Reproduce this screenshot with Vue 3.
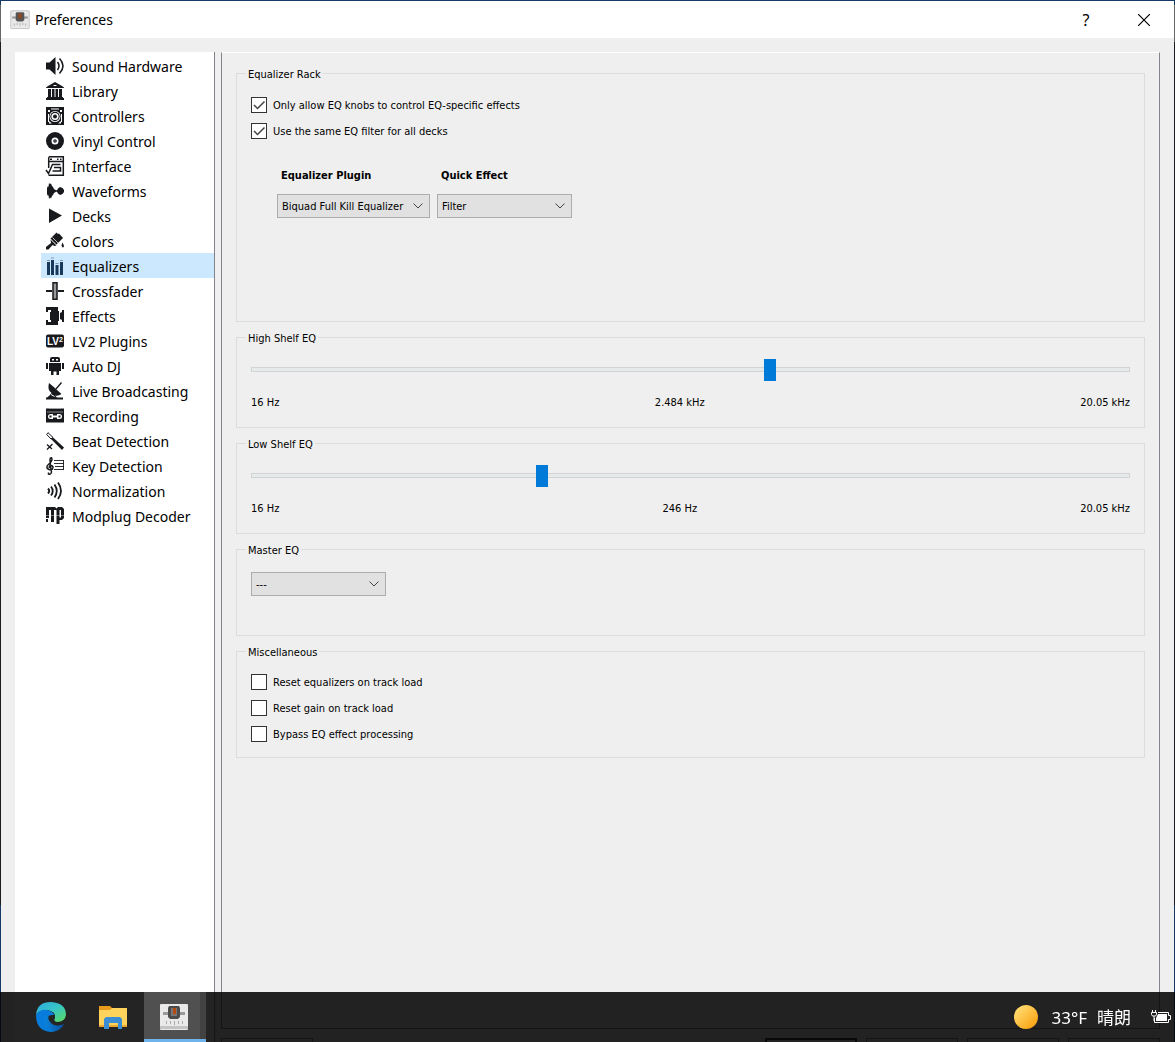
<script setup>
import { ref } from 'vue'

const pages = [
  { name: 'Sound Hardware', icon: '<path d="M0 5.5H3.5L9.5 0V18L3.5 12.500H0z"/><g fill="none" stroke="currentColor" stroke-width="1.500"><path d="M11.500 5Q14.500 9 11.500 13"/><path d="M13.500 1.500Q20.500 9 13.500 16.500"/></g>' },
  { name: 'Library', icon: '<path d="M0 5.500L2 4L9 0L16 4L18 5.500V6H0zM2 7H5V15H2zM6 7H8.500V15H6zM9.500 7H12V15H9.500zM13 7H16V15H13zM1 15H17V16H18V18H0V16H1z"/><path d="M7.500 3.500H10.500" stroke="#fff"/>' },
  { name: 'Controllers', icon: '<path d="M0 0H18V18H0z"/><g fill="#fff"><path d="M2 3H4V5H2zM14 3H16V5H14zM5 1.500H13V2.500H5zM2 7H3V15H2zM15 7H16V15H15zM3 14L6 16.500H3zM15 14L12 16.500H15z"/><circle cx="9" cy="9.500" r="5.500"/></g><circle cx="9" cy="9.500" r="4.700"/><circle cx="9" cy="9.500" r="3.600" fill="#fff"/><circle cx="9" cy="9.500" r="2"/>' },
  { name: 'Vinyl Control', icon: '<circle cx="9" cy="9" r="9"/><circle cx="9" cy="9" r="3.500" fill="#fff"/><circle cx="9" cy="9" r="1.800"/><circle cx="9" cy="9" r=".6" fill="#fff"/>' },
  { name: 'Interface', icon: '<g fill="none" stroke="currentColor" stroke-width="1.500"><path d="M2.700 11V1.500Q2.700 -.3 3.500 -.3H17.300V18.300H2.500M3 4.500H17"/><path d="M0 13L2.500 16.500L6.500 7.500H14.500M8 10.500H14.500V14H6.500"/></g><path d="M4 1.500H6V3H4zM11 1.500H12.500V3H11zM14 1.500H15.500V3H14z"/>' },
  { name: 'Waveforms', icon: '<path d="M1 6L2 4L2.500 5L3 1L4 2L5 1.500L6 4L7 5L8 7L10 8.300H11L12 6.500L14 5L16.500 6L18 8V10L16.500 12L14 13L12 11.500L11 9.700H10L8 11L7 13L6 14L5 16.500L4 15.500L3 17L2.500 13L2 14L1 12z"/>' },
  { name: 'Decks', icon: '<path d="M3 1.500L16 8.500L3 16z"/>' },
  { name: 'Colors', icon: '<path d="M7 4L10.500 .5L12 2L13 1.500L17 6L14.500 8.500L10.500 12.500L4.500 6.500zM4.500 7.500L10.500 13.500L8.500 14L6.500 13L2.500 17.500H0V15L5 11zM16.500 10.500Q19 15 17 15.500Q14.500 15 16.500 10.500z"/><path d="M6.500 5.500L12 11" stroke="#fff" stroke-width=".7"/>' },
  { name: 'Equalizers', icon: '<path d="M1 5H4V18H1zM5 3H8V18H5zM9.500 8H12.500V18H9.500zM14 5H17V18H14z"/><path d="M1 3.500H4M5 1H8M9.500 6.500H12.500M14 3.500H17" stroke="#7d98ac"/>' },
  { name: 'Crossfader', icon: '<path d="M0 8H6V10H0zM12 8H18V10H12z"/><path d="M7 .7H11V17.300H7z" fill="#999" stroke="currentColor" stroke-width="1.500"/>' },
  { name: 'Effects', icon: '<path d="M0 0H12V4H13V14H12V18H0V13H2V15H5V13H4V5H5V3H2V5H0zM14 6L16 5V3H18V15H16V13L14 12z"/>' },
  { name: 'LV2 Plugins', icon: '<rect y="2.500" width="18" height="13" rx="2"/><text x="1" y="13" fill="#fff" font-family="Liberation Sans,sans-serif" font-weight="bold" font-size="10">LV</text><text x="13" y="10" fill="#fff" font-family="Liberation Sans,sans-serif" font-weight="bold" font-size="7">2</text>' },
  { name: 'Auto DJ', icon: '<path d="M4 5V2Q4 0 6 0H12Q14 0 14 2V5zM3 6H15V14H13V18H10.500V14.500H7.500V18H5V14H3zM0 6H2V12H0zM16 6H18V12H16z"/><path d="M6 2H8V3.500H6zM10 2H12V3.500H10z" fill="#fff"/>' },
  { name: 'Live Broadcasting', icon: '<path d="M3 1Q1 8 5.500 11L3.500 13.500L1 15.500H0V17.500H17V15.500H11L9 13.500Q12 14.500 15.500 12L10.500 7.500L9 6z"/><path d="M10 7L15.500 .5" stroke="currentColor" stroke-width="1.300"/><path d="M5 12.500L8.500 14.500" stroke="#fff"/>' },
  { name: 'Recording', icon: '<path d="M0 1.500H18V15.500H0z"/><path d="M3 1.500H15M1 5H17" stroke="#aaa" stroke-width=".8"/><rect x="2" y="7" width="14" height="5" rx="2.500" fill="#fff"/><path d="M3.500 8.500H5.500V10.500H3.500zM12.500 8.500H14.500V10.500H12.500zM7 7H11V8.500H7zM7 10.500H11V12H7z"/>' },
  { name: 'Beat Detection', icon: '<path d="M6 4.500L18 15.500L16 18L4.500 6.500z"/><path d="M2 .7L7 5.500L5 7L.7 2.500z" fill="#fff" stroke="currentColor"/><path d="M1 12.500L6 17M6.500 12L1 17.500" stroke="currentColor" stroke-width="1.300"/>' },
  { name: 'Key Detection', icon: '<path d="M5 13L4 3Q4 .5 5.500 .7Q7 3 4 6Q.5 8.500 1 11Q3 14 6.500 12Q8 9 5 8.500Q2.500 9 3.500 11M4 6L5.500 15Q5 18 2.500 17V15.500" fill="none" stroke="currentColor" stroke-width="1.500"/><path d="M8 3.500H18M8 6.500H18M9 9.500H18M8 12.500H18M17.500 3.500V13" fill="none" stroke="currentColor" stroke-width=".9"/>' },
  { name: 'Normalization', icon: '<g fill="none" stroke="currentColor" stroke-width="1.800"><path d="M2 6.500Q4.500 9 2 11.500M5 4.500Q8.500 9 5 13.500M8.500 2.500Q13 9 8.500 15.500M12 .5Q18 9 12 17"/></g>' },
  { name: 'Modplug Decoder', icon: '<path d="M0 0H9L10.500 1.500L12 0H16L18 2V11L16 13H13.500V17H10.500V3H8V15H5V3H3V11H0zM13.500 3V10.500H15V3zM0 12H2V15H0z"/><path d="M0 8.500H18" stroke="#fff" stroke-width=".4"/>' },
]

const current = ref('Equalizers')
const eqOnly = ref(true)
const sameFilter = ref(true)
const resetEq = ref(false)
const resetGain = ref(false)
const bypass = ref(false)
const highShelf = ref(592)
const lowShelf = ref(328)
</script>

<template>
  <div class="desktop">
    <main class="window">
      <header class="titlebar">
        <svg class="app-icon" viewBox="0 0 28 28" aria-hidden="true">
          <rect x="1" y="1" width="26" height="25" rx="1" fill="#e9e9e9" stroke="#b5b5b5" />
          <path d="M3 9h22v3H3z" fill="#999" />
          <path d="M9 3h10l1 2v9l-2 2H10l-2-2V5z" fill="#555" />
          <path d="M12 5h4v7h-4z" fill="#9a471c" />
          <path d="M6 19v3M10 18v3M14 18v4M18 18v3M22 19v3" stroke="#999" />
        </svg>
        <h1>Preferences</h1>
        <button class="title-btn help" aria-label="Help">?</button>
        <button class="title-btn close" aria-label="Close">
          <svg width="12" height="12" viewBox="0 0 12 12"><path d="M0 0L12 12M12 0L0 12" stroke="#000" stroke-width="1.200" /></svg>
        </button>
      </header>

      <div class="body">
        <nav class="sidebar" aria-label="Preference pages">
          <ul>
            <li v-for="p in pages" :key="p.name">
              <button :class="{ active: p.name === current }" @click="current = p.name">
                <svg class="page-icon" viewBox="0 0 18 18" aria-hidden="true" v-html="p.icon"></svg>
                <span>{{ p.name }}</span>
              </button>
            </li>
          </ul>
        </nav>

        <div class="content">
          <section class="panel">
            <fieldset class="rack">
              <legend>Equalizer Rack</legend>
              <div class="group">
                <label class="check"><input v-model="eqOnly" type="checkbox" /><span>Only allow EQ knobs to control EQ-specific effects</span></label>
                <label class="check"><input v-model="sameFilter" type="checkbox" /><span>Use the same EQ filter for all decks</span></label>
                <div class="plugins">
                  <div class="plugin wide">
                    <label for="plugin">Equalizer Plugin</label>
                    <select id="plugin"><option>Biquad Full Kill Equalizer</option></select>
                  </div>
                  <div class="plugin">
                    <label for="quick">Quick Effect</label>
                    <select id="quick"><option>Filter</option></select>
                  </div>
                </div>
              </div>
            </fieldset>

            <fieldset class="shelf">
              <legend>High Shelf EQ</legend>
              <div class="group">
                <input v-model="highShelf" type="range" min="0" max="1000" aria-label="High Shelf EQ" />
                <div class="scale"><span>16 Hz</span><span>2.484 kHz</span><span>20.05 kHz</span></div>
              </div>
            </fieldset>

            <fieldset class="shelf">
              <legend>Low Shelf EQ</legend>
              <div class="group">
                <input v-model="lowShelf" type="range" min="0" max="1000" aria-label="Low Shelf EQ" />
                <div class="scale"><span>16 Hz</span><span>246 Hz</span><span>20.05 kHz</span></div>
              </div>
            </fieldset>

            <fieldset class="master">
              <legend>Master EQ</legend>
              <div class="group">
                <select aria-label="Master EQ"><option>---</option></select>
              </div>
            </fieldset>

            <fieldset>
              <legend>Miscellaneous</legend>
              <div class="group">
                <label class="check"><input v-model="resetEq" type="checkbox" /><span>Reset equalizers on track load</span></label>
                <label class="check"><input v-model="resetGain" type="checkbox" /><span>Reset gain on track load</span></label>
                <label class="check"><input v-model="bypass" type="checkbox" /><span>Bypass EQ effect processing</span></label>
              </div>
            </fieldset>
          </section>
          <div class="button-row" aria-hidden="true">
            <i class="first"></i><i class="default"></i><i></i><i></i><i></i>
          </div>
        </div>
      </div>
    </main>

    <footer class="taskbar">
      <button class="task" aria-label="Edge">
        <svg width="30" height="30" viewBox="0 0 30 30">
          <defs>
            <linearGradient id="edgeTop" x1="0" y1="0" x2="1" y2="1"><stop offset="0" stop-color="#2fa9e6" /><stop offset=".5" stop-color="#37c6c4" /><stop offset="1" stop-color="#5fdc5a" /></linearGradient>
            <linearGradient id="edgeLow" x1="0" y1="0" x2="1" y2="0"><stop offset="0" stop-color="#0a84dc" /><stop offset="1" stop-color="#0b4d9c" /></linearGradient>
          </defs>
          <path d="M0 13Q1 0 15 0Q30 1 30 13Q29 20 21 20Q17 19 19 16Q20 9 11 8Q3 8 0 13z" fill="url(#edgeTop)" />
          <path d="M0 13Q4 7 11 8Q17 9 18 13Q10 12 11 19Q14 26 27 23Q22 30 15 30Q0 29 0 13z" fill="#087cdb" />
          <path d="M13 12Q7 15 9 22Q11 29 19 29Q25 28 28 22Q20 26 15 21Q11 17 13 12z" fill="url(#edgeLow)" />
        </svg>
      </button>
      <button class="task" aria-label="File Explorer">
        <svg width="28" height="24" viewBox="0 0 28 24">
          <path d="M0 1h11l2 2h14v19H0z" fill="#e89c1c" />
          <path d="M0 5h11l2-2h15v19H0z" fill="#ffd35c" />
          <path d="M0 20h28v2H0z" fill="#eda92f" />
          <path d="M5 14l2-2h14l2 2v10h-4v-6h-9v6H5z" fill="#3b8dd4" />
        </svg>
      </button>
      <button class="task running" aria-label="Mixxx">
        <svg width="28" height="28" viewBox="0 0 28 28">
          <rect x="0" y="1" width="28" height="26" rx="1" fill="#e9e9e9" />
          <path d="M0 23h28v3H0z" fill="#c4c4c4" />
          <path d="M3 9h22v3H3z" fill="#999" />
          <path d="M9 3h10l1 2v9l-2 2H10l-2-2V5z" fill="#4c4c4c" />
          <path d="M11 5h6v8h-6z" fill="#777" />
          <path d="M13 5h3v6h-3z" fill="#b64a10" />
          <path d="M6.500 18v3M10.500 18v3M14.500 18v4M18.500 18v3M22.500 18v3" stroke="#aaa" />
        </svg>
      </button>
      <div class="tray">
        <svg width="24" height="24" viewBox="0 0 24 24">
          <defs><linearGradient id="sun" x1="0" y1="0" x2="1" y2="1"><stop offset=".2" stop-color="#ffd768" /><stop offset=".8" stop-color="#fba81c" /></linearGradient></defs>
          <circle cx="12" cy="12" r="12" fill="url(#sun)" />
        </svg>
        <span class="weather"><span>33°F</span><span>晴朗</span></span>
        <svg width="20" height="14" viewBox="0 0 20 14">
          <path d="M7 2.500H17.500V5.500H19.500V9.500H17.500V12.500H3.500V8" fill="none" stroke="#fff" />
          <path d="M7 4h9v7H5V8z" fill="#fff" />
          <path d="M1.500 0v2M4.500 0v2M.5 2.500h5v2l-1 1.500h-3l-1-1.500zM3 6v5" fill="none" stroke="#fff" />
        </svg>
      </div>
    </footer>
  </div>
</template>

<style>
body {
  margin: 0;
}
</style>

<style scoped>
* {
  box-sizing: border-box;
}

.desktop {
  height: 100vh;
  padding: 1px 1px 0;
  overflow: hidden;
  background: linear-gradient(#163a66 5px, #666 5px 42px, #1b1c20 42px 905px, #163a66 905px);
  font-family: "DejaVu Sans Condensed", "Noto Sans", sans-serif;
  font-size: 11px;
  line-height: 14px;
  color: #000;
}

button,
select,
input {
  margin: 0;
  font: inherit;
  color: inherit;
}

button {
  padding: 0;
  border: 0;
  background: none;
}

.window {
  display: flex;
  flex-direction: column;
  height: 100%;
  background: #efefef;
}

.titlebar {
  display: flex;
  flex: none;
  align-items: center;
  height: 37px;
  padding-left: 9px;
  background: #fff;
  font-family: "Noto Sans", sans-serif;
}

.app-icon {
  width: 20px;
  height: 20px;
}

h1 {
  flex: 1;
  margin: 0 0 0 5px;
  font-size: 14px;
  font-weight: 400;
  line-height: 20px;
}

.title-btn {
  display: flex;
  align-items: center;
  justify-content: center;
  width: 56px;
  height: 37px;
  font-size: 16px;
}

.close {
  width: 60px;
}

.body {
  display: flex;
  flex: 1;
  min-height: 0;
  padding: 14px 14px 0;
}

.sidebar {
  width: 200px;
  padding: 1px 0 0 26px;
  border-right: 1px solid #82858c;
  background: #fff;
  font-family: "Noto Sans", sans-serif;
  font-size: 14px;
}

.sidebar ul {
  margin: 0;
  padding: 0;
  list-style: none;
}

.sidebar button {
  display: flex;
  align-items: center;
  gap: 8px;
  width: 100%;
  height: 25px;
  padding: 0 5px;
  text-align: left;
  white-space: nowrap;
}

.sidebar button span {
  padding-top: 2px;
}

.sidebar .active {
  background: #cce8ff;
}

.page-icon {
  flex: none;
  width: 18px;
  height: 18px;
  overflow: visible;
  color: #17191d;
  fill: currentColor;
}

.active .page-icon {
  color: #17395a;
}

.content {
  display: flex;
  flex: 1;
  flex-direction: column;
  min-width: 0;
  margin-left: 6px;
}

.panel {
  display: flex;
  flex: 1;
  flex-direction: column;
  gap: 8px;
  padding: 13px 14px;
  border: 1px solid #82858c;
  border-top-color: #fff;
}

fieldset {
  min-width: 0;
  margin: 0;
  padding: 0 9px;
  border: 1px solid #dcdcdc;
}

legend {
  height: 14px;
  padding: 2px 2px 0;
}

.group {
  display: flex;
  flex-direction: column;
  gap: 10px;
  padding: 16px 5px 15px;
}

.rack .group {
  height: 241px;
  padding-top: 17px;
}

.shelf .group {
  gap: 16px;
  padding-bottom: 17px;
}

.shelf .group {
  padding-top: 15px;
}

.master .group {
  height: 79px;
}

.check {
  display: flex;
  align-items: center;
  gap: 6px;
  height: 16px;
}

.check span {
  padding-top: 2px;
}

input[type="checkbox"] {
  width: 16px;
  height: 16px;
  border: 1px solid #333;
  background: #fff;
  appearance: none;
}

input[type="checkbox"]:checked {
  background: #fff url("data:image/svg+xml,%3Csvg xmlns='http://www.w3.org/2000/svg' viewBox='0 0 14 14'%3E%3Cpath d='M2 7L5.500 10.500L12.500 3.500' fill='none' stroke='%23444' stroke-width='1.500'/%3E%3C/svg%3E");
}

.plugins {
  display: flex;
  gap: 7px;
  margin: 20px 0 0 26px;
}

.plugin {
  display: flex;
  flex-direction: column;
  gap: 11px;
}

.plugin label {
  padding-left: 4px;
  font-weight: 700;
}

select {
  width: 135px;
  height: 24px;
  padding: 2px 22px 0 4px;
  border: 1px solid #adadad;
  border-radius: 0;
  background: #e1e1e1 url("data:image/svg+xml,%3Csvg xmlns='http://www.w3.org/2000/svg' width='10' height='6' viewBox='0 0 10 6'%3E%3Cpath d='M.5 .5L5 5L9.500 .5' fill='none' stroke='%23444'/%3E%3C/svg%3E") no-repeat right 6px center;
  appearance: none;
}

.wide select {
  width: 153px;
}

input[type="range"] {
  width: 100%;
  height: 21px;
  background: none;
  appearance: none;
}

input[type="range"]::-webkit-slider-runnable-track {
  height: 5px;
  border: 1px solid #d1d4d4;
  background: #e7eaea;
}

input[type="range"]::-webkit-slider-thumb {
  width: 12px;
  height: 22px;
  margin-top: -9px;
  border: 0;
  border-radius: 0;
  background: #007ad9;
  appearance: none;
}

.scale {
  display: flex;
  justify-content: space-between;
}

.button-row {
  display: flex;
  flex: none;
  gap: 9px;
  height: 13px;
  padding-top: 9px;
}

.button-row i {
  width: 92px;
  border: 1px solid #888;
  border-bottom: 0;
}

.button-row .first {
  margin-right: auto;
}

.button-row .default {
  border: 2px solid #333;
  border-bottom: 0;
}

.taskbar {
  position: fixed;
  right: 0;
  bottom: 0;
  left: 0;
  display: flex;
  height: 50px;
  padding-left: 20px;
  background: rgba(3, 3, 3, 0.87);
}

.task {
  display: flex;
  align-items: center;
  justify-content: center;
  width: 62px;
}

.running {
  padding: 2px 3px 0 0;
  border-bottom: 3px solid #6fb3ec;
  background: linear-gradient(to right, #505050 56px, #424242 56px);
}

.tray {
  display: flex;
  align-items: center;
  margin-left: auto;
  padding-right: 4px;
  color: #fff;
}

.weather {
  display: flex;
  gap: 10px;
  margin: 0 20px 0 13px;
  padding-top: 2px;
  font-family: "Noto Sans", "Noto Sans CJK SC", sans-serif;
  font-size: 17px;
  line-height: 24px;
}
</style>
